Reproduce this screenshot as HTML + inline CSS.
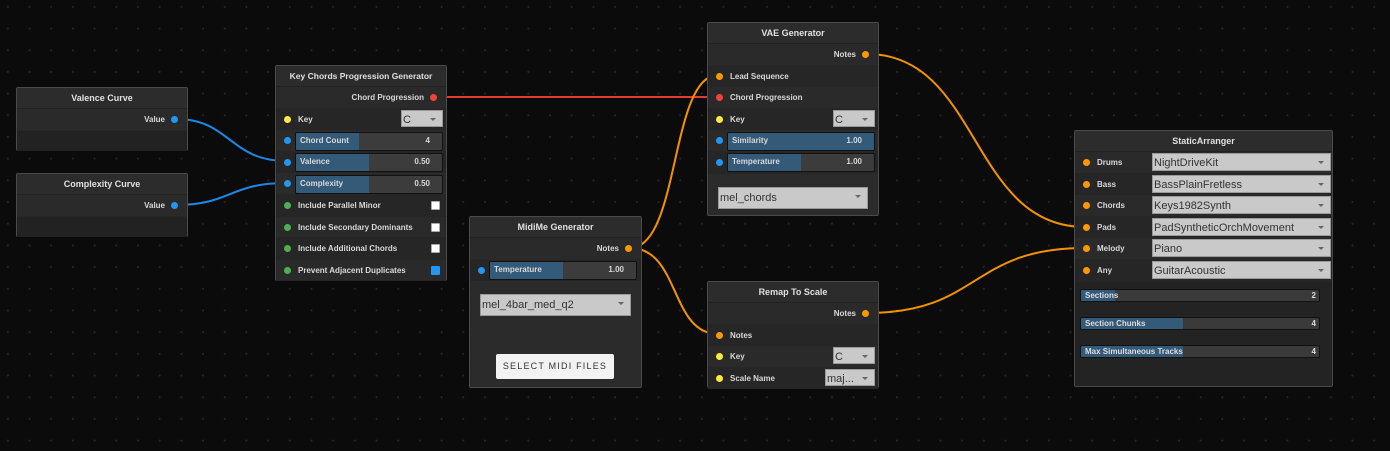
<!DOCTYPE html>
<html><head><meta charset="utf-8"><style>
*{box-sizing:border-box;margin:0;padding:0}
body{width:1390px;height:451px;overflow:hidden;background:#0b0b0b;font-family:"Liberation Sans",sans-serif;position:relative;
background-image:radial-gradient(circle,#262626 0.8px,transparent 1.2px);background-size:21.7px 21.7px;background-position:-3px -4px}
.n{position:absolute;background:#2b2b2b;border:1px solid #4a4a4a;border-radius:2px;color:#ddd;font-size:8px}
.t{height:21px;line-height:21px;text-align:center;font-size:9px;font-weight:bold;color:#e0e0e0;border-bottom:1px solid #222;background:#2c2c2c;white-space:nowrap}
.r{position:relative;height:21.6px;line-height:21.6px;border-bottom:1px solid #262626;background:#2a2a2a;font-weight:bold;color:#d8d8d8;white-space:nowrap}
.r.alt{background:#262626}
.d{position:absolute;width:7px;height:7px;border-radius:50%;top:7px}
.in{left:8px}.lbl{position:absolute;left:22px}
.out{right:9px}.olbl{position:absolute;right:22px}
.b{background:#2196f3}.o{background:#ff9800}.y{background:#ffeb3b}.g{background:#4caf50}.rd{background:#f44336}
.sl{position:absolute;top:1.5px;height:19px;background:#3c3c3c;border:1.5px solid #111;border-radius:2px;overflow:hidden}
.sl .f{position:absolute;left:0;top:0;bottom:0;background:#345a7a}
.sl .a{position:absolute;left:4px;top:0;line-height:16px}
.sl .v{position:absolute;right:12px;top:0;line-height:16px}
.sel{position:absolute;background:#c9c9c9;border:1px solid #999;color:#333;font-weight:normal;font-size:11px;line-height:18px;padding-left:1px}
.sel:after{content:"";position:absolute;right:6px;top:7px;border:3px solid transparent;border-top:3px solid #666}
.cb{position:absolute;right:6px;top:6px;width:9px;height:9px;background:#fff;border:1px solid #aaa;border-radius:1px}
.cb.on{background:#2196f3;border-color:#2196f3}
.ssl{position:absolute;left:5px;width:240px;height:13px;background:#3a3a3a;border:1px solid #111;border-radius:2px;overflow:hidden;font-weight:bold;font-size:8px;color:#ddd}
.ssl .f{position:absolute;left:0;top:0;bottom:0;background:#345a7a}
.ssl .a{position:absolute;left:4px;line-height:12px}
.ssl .v{position:absolute;right:3px;line-height:12px}
</style></head><body>
<svg width="1390" height="451" style="position:absolute;left:0;top:0">
<g fill="none" stroke-width="2">
<path d="M176 119 C230 119,230 161,286 161" stroke="#1e88e5"/>
<path d="M176 205 C230 205,230 183,286 183" stroke="#1e88e5"/>
<path d="M435 97 L718 97" stroke="#e53935"/>
<path d="M630 248 C680 248,670 75,718 75" stroke="#f39200"/>
<path d="M630 248 C680 248,670 334,718 334" stroke="#f39200"/>
<path d="M867 54 C980 54,970 227,1085 227" stroke="#f39200"/>
<path d="M867 313 C980 313,970 248,1085 248" stroke="#f39200"/>
</g></svg>

<div class="n" style="left:16px;top:87px;width:172px;height:64px">
<div class="t">Valence Curve</div>
<div class="r"><span class="olbl">Value</span><span class="d out b"></span></div>
<div style="height:20px;background:#222"></div>
</div>

<div class="n" style="left:16px;top:173px;width:172px;height:64px">
<div class="t">Complexity Curve</div>
<div class="r"><span class="olbl">Value</span><span class="d out b"></span></div>
<div style="height:20px;background:#222"></div>
</div>

<div class="n" style="left:275px;top:65px;width:172px;height:216px">
<div class="t" style="font-size:8.5px">Key Chords Progression Generator</div>
<div class="r"><span class="olbl">Chord Progression</span><span class="d out rd"></span></div>
<div class="r alt"><span class="d in y"></span><span class="lbl">Key</span><div class="sel" style="left:125px;top:1px;width:42px;height:17px">C</div></div>
<div class="r"><span class="d in b"></span><div class="sl" style="left:19px;width:148px"><div class="f" style="width:63px"></div><span class="a">Chord Count</span><span class="v">4</span></div></div>
<div class="r alt"><span class="d in b"></span><div class="sl" style="left:19px;width:148px"><div class="f" style="width:73px"></div><span class="a">Valence</span><span class="v">0.50</span></div></div>
<div class="r"><span class="d in b"></span><div class="sl" style="left:19px;width:148px"><div class="f" style="width:73px"></div><span class="a">Complexity</span><span class="v">0.50</span></div></div>
<div class="r alt"><span class="d in g"></span><span class="lbl">Include Parallel Minor</span><span class="cb"></span></div>
<div class="r"><span class="d in g"></span><span class="lbl">Include Secondary Dominants</span><span class="cb"></span></div>
<div class="r alt"><span class="d in g"></span><span class="lbl">Include Additional Chords</span><span class="cb"></span></div>
<div class="r"><span class="d in g"></span><span class="lbl">Prevent Adjacent Duplicates</span><span class="cb on"></span></div>
</div>

<div class="n" style="left:469px;top:216px;width:173px;height:172px">
<div class="t">MidiMe Generator</div>
<div class="r"><span class="olbl">Notes</span><span class="d out o"></span></div>
<div class="r alt"><span class="d in b"></span><div class="sl" style="left:19px;width:148px"><div class="f" style="width:73px"></div><span class="a">Temperature</span><span class="v">1.00</span></div></div>
<div class="sel" style="left:10px;top:77px;width:151px;height:22px;line-height:20px">mel_4bar_med_q2</div>
<div style="position:absolute;left:26px;top:137px;width:118px;height:25px;background:#f2f2f2;border-radius:2px;color:#333;font-size:9px;letter-spacing:1.2px;text-align:center;line-height:25px">SELECT MIDI FILES</div>
</div>

<div class="n" style="left:707px;top:22px;width:172px;height:194px">
<div class="t">VAE Generator</div>
<div class="r"><span class="olbl">Notes</span><span class="d out o"></span></div>
<div class="r alt"><span class="d in o"></span><span class="lbl">Lead Sequence</span></div>
<div class="r"><span class="d in rd"></span><span class="lbl">Chord Progression</span></div>
<div class="r alt"><span class="d in y"></span><span class="lbl">Key</span><div class="sel" style="left:125px;top:1px;width:42px;height:17px">C</div></div>
<div class="r"><span class="d in b"></span><div class="sl" style="left:19px;width:148px"><div class="f" style="width:148px"></div><span class="a">Similarity</span><span class="v">1.00</span></div></div>
<div class="r alt"><span class="d in b"></span><div class="sl" style="left:19px;width:148px"><div class="f" style="width:73px"></div><span class="a">Temperature</span><span class="v">1.00</span></div></div>
<div class="sel" style="left:10px;top:164px;width:150px;height:22px;line-height:20px">mel_chords</div>
</div>

<div class="n" style="left:707px;top:281px;width:172px;height:107px">
<div class="t">Remap To Scale</div>
<div class="r"><span class="olbl">Notes</span><span class="d out o"></span></div>
<div class="r alt"><span class="d in o"></span><span class="lbl">Notes</span></div>
<div class="r"><span class="d in y"></span><span class="lbl">Key</span><div class="sel" style="left:125px;top:1px;width:42px;height:17px">C</div></div>
<div class="r alt"><span class="d in y"></span><span class="lbl">Scale Name</span><div class="sel" style="left:117px;top:1px;width:50px;height:17px">maj...</div></div>
</div>

<div class="n" style="left:1074px;top:130px;width:259px;height:257px;background:#232323">
<div class="t">StaticArranger</div>
<div class="r"><span class="d in o"></span><span class="lbl">Drums</span><div class="sel" style="left:77px;top:1px;width:179px;height:18px">NightDriveKit</div></div>
<div class="r alt"><span class="d in o"></span><span class="lbl">Bass</span><div class="sel" style="left:77px;top:1px;width:179px;height:18px">BassPlainFretless</div></div>
<div class="r"><span class="d in o"></span><span class="lbl">Chords</span><div class="sel" style="left:77px;top:1px;width:179px;height:18px">Keys1982Synth</div></div>
<div class="r alt"><span class="d in o"></span><span class="lbl">Pads</span><div class="sel" style="left:77px;top:1px;width:179px;height:18px">PadSyntheticOrchMovement</div></div>
<div class="r"><span class="d in o"></span><span class="lbl">Melody</span><div class="sel" style="left:77px;top:1px;width:179px;height:18px">Piano</div></div>
<div class="r alt"><span class="d in o"></span><span class="lbl">Any</span><div class="sel" style="left:77px;top:1px;width:179px;height:18px">GuitarAcoustic</div></div>
<div class="ssl" style="top:158px"><div class="f" style="width:34px"></div><span class="a">Sections</span><span class="v">2</span></div>
<div class="ssl" style="top:186px"><div class="f" style="width:102px"></div><span class="a">Section Chunks</span><span class="v">4</span></div>
<div class="ssl" style="top:214px"><div class="f" style="width:102px"></div><span class="a">Max Simultaneous Tracks</span><span class="v">4</span></div>
</div>
</body></html>
